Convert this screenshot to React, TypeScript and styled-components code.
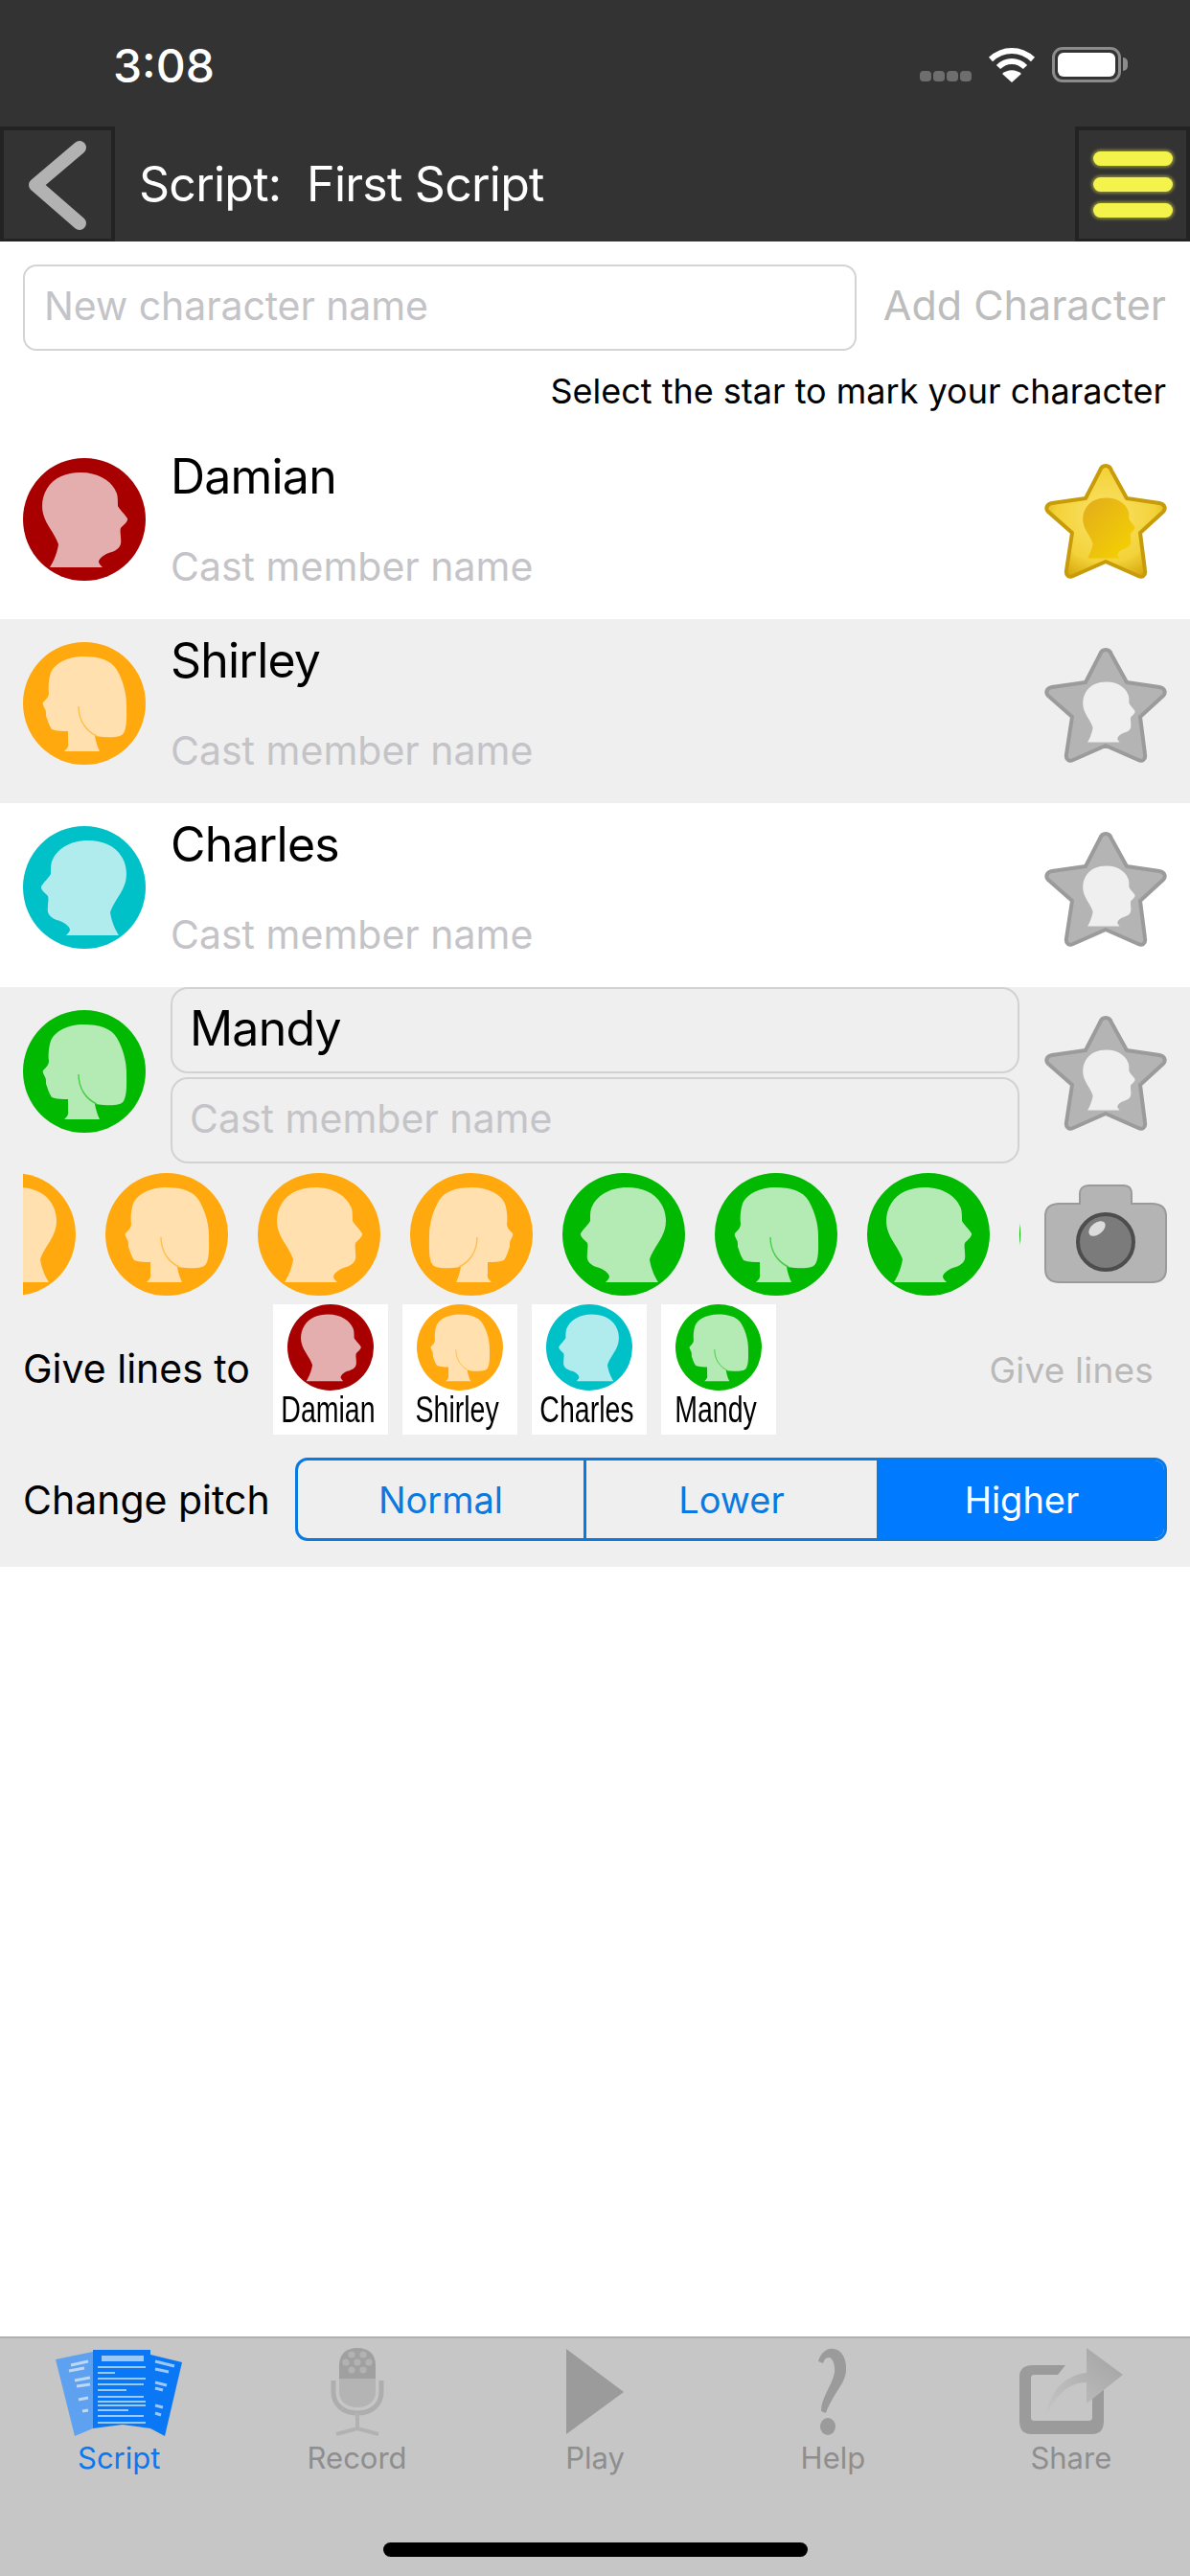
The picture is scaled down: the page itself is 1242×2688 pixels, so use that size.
import React from "react";
import styled, { createGlobalStyle } from "styled-components";

const GlobalStyle = createGlobalStyle`
  html, body {
    margin: 0;
    padding: 0;
    background: #fff;
  }
  * {
    box-sizing: border-box;
  }
`;

const FONT = `Inter, "Liberation Sans", sans-serif`;

const MALE =
  "M60 15 C46 15 32 20 25 32 C20 40 19 50 21 58 C24 70 33 78 37 90 C36 98 32 108 28 114 L83 114 C81 112 79 110 79 108 C80 104 84 102 87 100 C92 98 98 97 101 92 C103 89 102 85 102 82 C102 79 101 77 102 73 C105 70 110 66 109 63 C106 58 101 54 99 50 C99 44 99 38 97 35 C93 25 80 15 60 15 Z";
const FEMALE =
  "M63 15 C80 15 92 19 98 29 C105 41 108 55 108 65 C108 75 109 88 105 95 C102 100 90 100 75 98 C76 104 78 110 80 114 L43 114 C46 111 48 109 47 105 L47 93 C42 93 35 93 30 91 C27 87 26 82 24 77 C24 74 24 71 23 70 C22 67 20 65 21 63 C24 60 27 57 27 53 C26 47 27 38 29 32 C33 22 47 15 63 15 Z";
const HAIR_LINE = "M58 67 C58 82 66 93 77 98";

const COLORS = {
  red: { ring: "#a80000", face: "#e4aeae" },
  orange: { ring: "#ffa90f", face: "#ffe0ae" },
  teal: { ring: "#00c0c8", face: "#b0ecee" },
  green: { ring: "#00b900", face: "#b4eab4" },
};

type Tint = keyof typeof COLORS;

const Page = styled.div`
  width: 1242px;
  height: 2688px;
  display: flex;
  flex-direction: column;
  background: #fff;
  color: #000;
  font-family: ${FONT};
  overflow: hidden;
`;

const StatusBar = styled.div`
  height: 132px;
  background: #333;
  display: flex;
  justify-content: space-between;
  align-items: center;
  padding: 4px 72px 0 118px;
`;

const Clock = styled.div`
  color: #fff;
  font-size: 48px;
  font-weight: 500;
`;

const StatusIcons = styled.div`
  display: flex;
  align-items: flex-end;
  height: 37px;
  margin-top: -2px;
`;

const SignalDots = styled.div`
  display: flex;
  gap: 2px;
  margin-right: 17px;
  padding-bottom: 1px;
`;

const SignalDot = styled.div`
  width: 12px;
  height: 11px;
  border-radius: 4px;
  background: #6e6e6e;
`;

const Battery = styled.div`
  position: relative;
  width: 72px;
  height: 37px;
  margin-left: 17px;
  border: 3px solid #8c8c8c;
  border-radius: 11px;
  padding: 3px;
`;

const BatteryFill = styled.div`
  width: 100%;
  height: 100%;
  background: #fff;
  border-radius: 6px;
`;

const BatteryNub = styled.div`
  position: absolute;
  right: -10px;
  top: 8px;
  width: 5px;
  height: 14px;
  background: #8c8c8c;
  border-radius: 0 6px 6px 0;
`;

const NavBar = styled.div`
  height: 120px;
  background: #333;
  display: flex;
  align-items: stretch;
`;

const NavBox = styled.div`
  width: 120px;
  border: 4px solid #232323;
  border-bottom-width: 3px;
  display: flex;
  flex-direction: column;
  align-items: center;
  justify-content: center;
`;

const MenuBar = styled.div`
  width: 83px;
  height: 15px;
  margin: 6px 0;
  border-radius: 9px;
  background: #f3f34c;
  box-shadow: 0 0 3px 2px rgba(243, 243, 76, 0.4);
`;

const Title = styled.div`
  flex: 1;
  padding-left: 25px;
  color: #fff;
  font-size: 50px;
  line-height: 120px;
  white-space: pre;
  letter-spacing: -0.75px;
`;

const AddRow = styled.div`
  display: flex;
  align-items: center;
  padding: 24px 25px 0 24px;
`;

const NewName = styled.div`
  width: 870px;
  height: 90px;
  border: 2px solid #d4d4d4;
  border-radius: 14px;
  padding: 0 20px;
  font-size: 41px;
  letter-spacing: -0.1px;
  line-height: 83px;
  color: #c4c4c8;
`;

const AddButton = styled.div`
  margin-left: auto;
  margin-top: -6px;
  font-size: 43px;
  color: #bdbdbd;
`;

const Hint = styled.div`
  height: 88px;
  padding: 22px 25px 0 0;
  text-align: right;
  font-size: 36px;
  line-height: 40px;
`;

const Row = styled.div<{ $shaded?: boolean }>`
  display: flex;
  height: 192px;
  padding: 0 24px;
  background: ${(p) => (p.$shaded ? "#efefef" : "#fff")};
`;

const AvatarSlot = styled.div`
  width: 128px;
  margin: 24px 26px 0 0;
`;

const Fields = styled.div`
  flex: 1;
  display: flex;
  flex-direction: column;
  gap: 4px;
`;

const Field = styled.div<{ $editing?: boolean; $large?: boolean; $empty?: boolean }>`
  height: 90px;
  padding: 0 ${(p) => (p.$editing ? "18px" : "0")};
  border: 2px solid ${(p) => (p.$editing ? "#d2d2d2" : "transparent")};
  border-left-width: ${(p) => (p.$editing ? "2px" : "0")};
  border-radius: 18px;
  font-size: ${(p) => (p.$large ? "50px" : "41px")};
  line-height: 82px;
  color: ${(p) => (p.$empty ? "#c4c4c8" : "#000")};
  letter-spacing: ${(p) => (p.$large ? "-0.8px" : "0")};
`;

const StarSlot = styled.div`
  width: 128px;
  margin: 30px 0 0 26px;
`;

const Panel = styled.div`
  background: #efefef;
  padding: 1px 24px 0;
  height: 413px;
`;

const PickerRow = styled.div`
  display: flex;
  align-items: center;
  height: 130px;
`;

const Carousel = styled.div`
  width: 1041px;
  overflow: hidden;
  display: flex;
`;

const CarouselTrack = styled.div`
  display: flex;
  gap: 31px;
  margin-left: -73px;
`;

const CameraSlot = styled.div`
  margin-left: 25px;
  width: 128px;
  height: 104px;
`;

const GiveRow = styled.div`
  display: flex;
  align-items: center;
  height: 136px;
  margin-top: 8px;
`;

const RowLabel = styled.div`
  font-size: 41px;
  white-space: nowrap;
`;

const GiveLabel = styled(RowLabel)`
  width: 261px;
  margin-top: -3px;
`;

const Chips = styled.div`
  display: flex;
  gap: 15px;
`;

const Chip = styled.div`
  width: 120px;
  height: 136px;
  background: #fff;
  display: flex;
  flex-direction: column;
  align-items: center;
`;

const ChipName = styled.div`
  font-family: "Liberation Sans", sans-serif;
  font-size: 38px;
  line-height: 41px;
  margin-left: -5px;
  transform: scaleX(0.75);
  white-space: nowrap;
`;

const GiveButton = styled.div`
  margin-left: auto;
  margin-right: 14px;
  font-size: 37px;
  letter-spacing: 0.2px;
  color: #b9b9b9;
`;

const PitchRow = styled.div`
  display: flex;
  align-items: center;
  justify-content: space-between;
  height: 87px;
  margin-top: 24px;
`;

const Segments = styled.div`
  display: flex;
  width: 910px;
  height: 87px;
  border: 3px solid #0a7ae0;
  border-radius: 13px;
  overflow: hidden;
`;

const Segment = styled.div<{ $active?: boolean; $width: number }>`
  flex: 0 0 ${(p) => p.$width}px;
  display: flex;
  align-items: center;
  justify-content: center;
  font-size: 38px;
  color: ${(p) => (p.$active ? "#fff" : "#0a7ae0")};
  background: ${(p) => (p.$active ? "#007aff" : "transparent")};
  & + & {
    border-left: 3px solid #0a7ae0;
  }
`;

const TabBar = styled.div`
  margin-top: auto;
  height: 250px;
  background: #c6c6c6;
  border-top: 2px solid #b0b0b0;
  display: flex;
  flex-direction: column;
`;

const Tabs = styled.div`
  display: flex;
  padding-top: 10px;
`;

const Tab = styled.div<{ $active?: boolean }>`
  flex: 1;
  display: flex;
  flex-direction: column;
  align-items: center;
  font-size: 31px;
  line-height: 38px;
  color: ${(p) => (p.$active ? "#0a78f0" : "#8e8e8e")};
`;

const TabIcon = styled.div`
  height: 94px;
  margin-bottom: 2px;
  display: flex;
  align-items: flex-start;
  justify-content: center;
  filter: blur(0.7px);
`;

const HomeBar = styled.div`
  width: 443px;
  height: 15px;
  margin: 69px auto 0;
  background: #000;
  border-radius: 8px;
`;

const Head: React.FC<{ kind: "male" | "female"; flip?: boolean; tint: Tint; size: number }> = ({
  kind,
  flip,
  tint,
  size,
}) => {
  const { ring, face } = COLORS[tint];
  return (
    <svg width={size} height={size} viewBox="0 0 128 128" style={{ display: "block", flex: "none" }}>
      <circle cx="64" cy="64" r="64" fill={ring} />
      <g transform={flip ? "translate(128 0) scale(-1 1)" : undefined}>
        <path d={kind === "male" ? MALE : FEMALE} fill={face} />
        {kind === "female" && <path d={HAIR_LINE} fill="none" stroke={ring} strokeWidth="1.4" opacity="0.6" />}
      </g>
    </svg>
  );
};

const STAR_D = "M64 4 C67 4 69 6 70 9 L86 38 L120 43 C126 44 127 49 124 52 L100 74 L105 113 C106 119 102 121 98 119 L64 104 L30 119 C26 121 22 119 23 113 L29 74 L4 52 C1 49 2 44 8 43 L43 38 L58 9 C59 6 61 4 64 4 Z";

const Star: React.FC<{ on?: boolean }> = ({ on }) => (
  <svg width="128" height="124" viewBox="0 2 128 124" style={{ display: "block" }}>
    <defs>
      <radialGradient id="goldStar" cx="50%" cy="45%" r="60%">
        <stop offset="0%" stopColor="#fbe36a" />
        <stop offset="70%" stopColor="#f3d23a" />
        <stop offset="100%" stopColor="#d9ab10" />
      </radialGradient>
      <linearGradient id="goldHead" x1="0" y1="0" x2="1" y2="1">
        <stop offset="0%" stopColor="#e2ac1c" />
        <stop offset="100%" stopColor="#f6d400" />
      </linearGradient>
    </defs>
    <path
      d={STAR_D}
      fill={on ? "url(#goldStar)" : "#b4b4b4"}
      stroke={on ? "#c79c08" : "#9b9b9b"}
      strokeWidth="4"
      strokeLinejoin="round"
    />
    <g transform="translate(28 28) scale(.61 .635)">
      <path d={MALE} fill={on ? "url(#goldHead)" : "#efefef"} />
    </g>
  </svg>
);

const Camera = () => (
  <svg width="128" height="104" viewBox="0 0 128 104" style={{ display: "block" }}>
    <path
      d="M37 20 V10 C37 4 41 1 46 1 H83 C88 1 91 4 91 10 V20 H112 C122 20 127 25 127 33 V88 C127 97 122 102 112 102 H16 C6 102 1 97 1 88 V33 C1 25 6 20 16 20 Z"
      fill="#b4b4b4"
      stroke="#9a9a9a"
      strokeWidth="2"
    />
    <circle cx="64" cy="60" r="29" fill="#7b7b7b" stroke="#4d4d4d" strokeWidth="4" />
    <ellipse cx="55" cy="46" rx="10" ry="6" fill="#dcdcdc" transform="rotate(-38 55 46)" />
  </svg>
);

const SCRIPT_LINES = [
  { y: 11, x1: 48, x2: 92, w: 6 },
  { y: 20, x1: 44, x2: 94, w: 2 },
  { y: 26, x1: 44, x2: 62, w: 2 },
  { y: 32, x1: 44, x2: 94, w: 2 },
  { y: 38, x1: 44, x2: 92, w: 2 },
  { y: 44, x1: 44, x2: 74, w: 2 },
  { y: 51, x1: 44, x2: 92, w: 2 },
  { y: 56, x1: 44, x2: 94, w: 2 },
  { y: 60, x1: 44, x2: 94, w: 2 },
  { y: 65, x1: 44, x2: 76, w: 2 },
  { y: 71, x1: 44, x2: 92, w: 2 },
  { y: 78, x1: 44, x2: 94, w: 2 },
];

const ScriptIcon = () => (
  <svg width="132" height="94" viewBox="0 0 132 94">
    <path d="M0 12 L39 4 V84 L20 92 Z" fill="#5da1f0" />
    <path d="M99 7 L132 15 L114 92 L99 84 Z" fill="#0a78f5" />
    <path d="M39 2 H99 V84 L70 80 L39 84 Z" fill="#0a78f5" />
    {SCRIPT_LINES.map((l) => (
      <line key={l.y} x1={l.x1} x2={l.x2} y1={l.y} y2={l.y} stroke="#9cc8f8" strokeWidth={l.w} />
    ))}
    <path d="M16 18 L34 14 M14 24 L30 21 M20 34 L36 31 M22 40 L36 38 M24 54 L34 52 M28 66 L34 65" stroke="#bcd8f6" strokeWidth="3" />
    <path d="M104 14 L124 19 M104 22 L118 25 M104 36 L116 39 M104 42 L112 44 M104 60 L112 62 M104 68 L110 70" stroke="#9cc8f8" strokeWidth="3" />
  </svg>
);

const MicIcon = () => (
  <svg width="56" height="92" viewBox="0 0 56 92">
    <path d="M9 32 V18 C9 6 17 0 28 0 C39 0 47 6 47 18 V32 Z" fill="#a0a0a0" />
    {[
      [22, 7], [34, 7], [16, 15], [28, 15], [40, 15], [22, 23], [34, 23],
    ].map(([cx, cy]) => (
      <circle key={`${cx}-${cy}`} cx={cx} cy={cy} r="3.6" fill="#b2b2b2" />
    ))}
    <path d="M9 32 H47 V46 C47 56 39 62 28 62 C17 62 9 56 9 46 Z" fill="#b4b4b4" />
    <path d="M3 34 V46 C3 60 14 68 28 68 C42 68 53 60 53 46 V34" fill="none" stroke="#aeaeae" strokeWidth="5" />
    <path d="M28 68 V84 M6 90 L28 84 L50 90" fill="none" stroke="#b2b2b2" strokeWidth="4" />
  </svg>
);

const PlayIcon = () => (
  <svg width="60" height="92" viewBox="0 0 60 92">
    <path d="M0 1 L60 46 L0 90 Z" fill="#9b9b9b" />
  </svg>
);

const HelpIcon = () => (
  <svg width="30" height="92" viewBox="0 0 30 92">
    <path d="M0 14 C3 4 10 0 16 1 C25 2 30 12 29 24 C28 38 15 48 8 68 L3 66 C3 52 14 40 17 26 C18 18 15 10 11 10 C8 10 6 12 5 16 Z" fill="#9b9b9b" />
    <ellipse cx="10" cy="82" rx="8" ry="9" fill="#9b9b9b" />
  </svg>
);

const ShareIcon = () => (
  <svg width="108" height="92" viewBox="0 0 108 92">
    <defs>
      <linearGradient id="shareArrow" x1="0" y1="1" x2="1" y2="0">
        <stop offset="0%" stopColor="#c6c6c6" />
        <stop offset="100%" stopColor="#a2a2a2" />
      </linearGradient>
    </defs>
    <path d="M14 18 H48 L40 28 H16 C13 28 12 29 12 32 V72 C12 75 13 76 16 76 H72 C75 76 76 75 76 72 V50 L88 42 V76 C88 85 84 90 76 90 H12 C4 90 0 85 0 76 V30 C0 22 5 18 14 18 Z" fill="#9b9b9b" />
    <path d="M28 72 C30 46 48 28 70 26 V0 L108 28 L70 58 V36 C52 36 38 48 28 72 Z" fill="url(#shareArrow)" />
  </svg>
);

const CAROUSEL: { tint: Tint; kind: "male" | "female"; flip?: boolean }[] = [
  { tint: "orange", kind: "male", flip: true },
  { tint: "orange", kind: "female" },
  { tint: "orange", kind: "male" },
  { tint: "orange", kind: "female", flip: true },
  { tint: "green", kind: "male", flip: true },
  { tint: "green", kind: "female" },
  { tint: "green", kind: "male" },
  { tint: "green", kind: "female", flip: true },
];

const CAST: { name: string; tint: Tint; kind: "male" | "female"; flip?: boolean }[] = [
  { name: "Damian", tint: "red", kind: "male" },
  { name: "Shirley", tint: "orange", kind: "female" },
  { name: "Charles", tint: "teal", kind: "male", flip: true },
  { name: "Mandy", tint: "green", kind: "female" },
];

const App: React.FC = () => {
  return (
    <Page>
      <GlobalStyle />
      <StatusBar>
        <Clock>3:08</Clock>
        <StatusIcons>
          <SignalDots>
            <SignalDot />
            <SignalDot />
            <SignalDot />
            <SignalDot />
          </SignalDots>
          <svg width="50" height="36" viewBox="0 0 50 36">
            <path d="M3 12 C16 0 34 0 47 12" fill="none" stroke="#fff" strokeWidth="6" />
            <path d="M11 20 C19 12 31 12 39 20" fill="none" stroke="#fff" strokeWidth="6" />
            <path d="M25 36 L15 27 C21 22 29 22 35 27 Z" fill="#fff" />
          </svg>
          <Battery>
            <BatteryFill />
            <BatteryNub />
          </Battery>
        </StatusIcons>
      </StatusBar>
      <NavBar>
        <NavBox>
          <svg width="112" height="112" viewBox="0 0 112 112">
            <path d="M79 17 L33 56 L79 96" fill="none" stroke="#b2b2b2" strokeWidth="14" strokeLinecap="round" strokeLinejoin="round" />
          </svg>
        </NavBox>
        <Title>{"Script:  First Script"}</Title>
        <NavBox>
          <MenuBar />
          <MenuBar />
          <MenuBar />
        </NavBox>
      </NavBar>
      <AddRow>
        <NewName>New character name</NewName>
        <AddButton>Add Character</AddButton>
      </AddRow>
      <Hint>Select the star to mark your character</Hint>
      {CAST.map((c, i) => {
        const editing = c.name === "Mandy";
        return (
          <Row key={c.name} $shaded={i % 2 === 1}>
            <AvatarSlot>
              <Head kind={c.kind} tint={c.tint} flip={c.flip} size={128} />
            </AvatarSlot>
            <Fields>
              <Field $large $editing={editing}>
                {c.name}
              </Field>
              <Field $empty $editing={editing}>
                Cast member name
              </Field>
            </Fields>
            <StarSlot>
              <Star on={i === 0} />
            </StarSlot>
          </Row>
        );
      })}
      <Panel>
        <PickerRow>
          <Carousel>
            <CarouselTrack>
              {CAROUSEL.map((h, i) => (
                <Head key={i} kind={h.kind} tint={h.tint} flip={h.flip} size={128} />
              ))}
            </CarouselTrack>
          </Carousel>
          <CameraSlot>
            <Camera />
          </CameraSlot>
        </PickerRow>
        <GiveRow>
          <GiveLabel>Give lines to</GiveLabel>
          <Chips>
            {CAST.map((c) => (
              <Chip key={c.name}>
                <Head kind={c.kind} tint={c.tint} flip={c.flip} size={90} />
                <ChipName>{c.name}</ChipName>
              </Chip>
            ))}
          </Chips>
          <GiveButton>Give lines</GiveButton>
        </GiveRow>
        <PitchRow>
          <RowLabel>Change pitch</RowLabel>
          <Segments>
            <Segment $width={298}>Normal</Segment>
            <Segment $width={306}>Lower</Segment>
            <Segment $width={300} $active>
              Higher
            </Segment>
          </Segments>
        </PitchRow>
      </Panel>
      <TabBar>
        <Tabs>
          <Tab $active>
            <TabIcon>
              <ScriptIcon />
            </TabIcon>
            Script
          </Tab>
          <Tab>
            <TabIcon>
              <MicIcon />
            </TabIcon>
            Record
          </Tab>
          <Tab>
            <TabIcon>
              <PlayIcon />
            </TabIcon>
            Play
          </Tab>
          <Tab>
            <TabIcon>
              <HelpIcon />
            </TabIcon>
            Help
          </Tab>
          <Tab>
            <TabIcon>
              <ShareIcon />
            </TabIcon>
            Share
          </Tab>
        </Tabs>
        <HomeBar />
      </TabBar>
    </Page>
  );
};

export default App;
